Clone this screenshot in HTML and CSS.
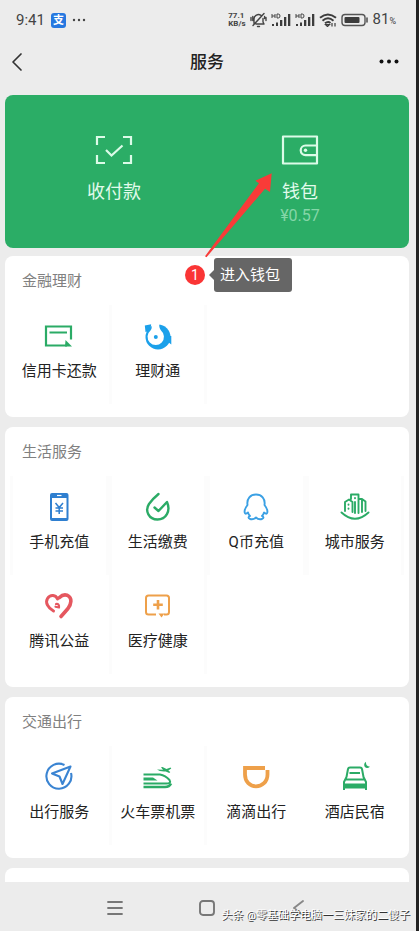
FILE: index.html
```html
<!DOCTYPE html>
<html lang="zh-CN">
<head>
<meta charset="utf-8">
<meta name="viewport" content="width=device-width, initial-scale=1">
<title>服务</title>
<link rel="stylesheet" href="styles.css">
</head>
<body>
<div class="screen">
  <div class="status">
    <div class="status-left">
      <span class="clock">9:41</span>
      <span class="alipay">支</span>
      <svg width="14" height="4" viewBox="0 0 14 4" fill="#444"><circle cx="2" cy="2" r="1.2"/><circle cx="7" cy="2" r="1.2"/><circle cx="12" cy="2" r="1.2"/></svg>
    </div>
    <div class="status-right">
      <span class="speed">77.1<br>KB/s</span>
      <svg width="17" height="16" viewBox="0 0 17 16" fill="none" stroke="#444" stroke-width="1.4" stroke-linecap="round" stroke-linejoin="round"><path d="M4 11.500V7a4.500 4.500 0 0 1 7-3.700M13 6.500V10l1 2H6M14 1.500L3 13.500M7.500 14.500h2M1 5.500v3M2.800 4.500v4M16 5.500v3M14.600 4.500v2"/></svg>
      <svg width="20" height="14" viewBox="0 0 20 14" fill="#3c3c3c"><path d="M1 1v4M4 1v4M1 3h3M6 1v4h1.200q1.800 0 1.800-2t-1.800-2z" fill="none" stroke="#444" stroke-width="1"/><path d="M1 11h2v2H1zM5 9.500h2V13H5zM9 7h2.300v6H9zM13 4h2.300v9H13zM17 1h2.300v12H17z"/></svg>
      <svg width="20" height="14" viewBox="0 0 20 14" fill="#3c3c3c"><path d="M1 1v4M4 1v4M1 3h3M6 1v4h1.200q1.800 0 1.800-2t-1.800-2z" fill="none" stroke="#444" stroke-width="1"/><path d="M1 11h2v2H1zM5 9.500h2V13H5zM9 7h2.300v6H9zM13 4h2.300v9H13zM17 1h2.300v12H17z"/></svg>
      <svg width="18" height="14" viewBox="0 0 18 14" fill="none" stroke="#3c3c3c" stroke-width="1.900"><path d="M1 4.800q7.800-6.800 16 0M3.500 7.700q5.500-4.800 11 0M6 10.300q3-2.500 5.500-.4"/><path d="M8.500 13.500l-2-2h4zM13 10v3.500M16 10v3.500" stroke-width="1.200"/></svg>
      <svg width="28" height="14" viewBox="0 0 28 14"><rect x="1" y="1.500" width="23" height="11" rx="3" fill="none" stroke="#555" stroke-width="1.400"/><rect x="3.500" y="4" width="15" height="6" rx="1" fill="#3c3c3c"/><path d="M26 5v4" stroke="#555" stroke-width="1.600" stroke-linecap="round"/></svg>
      <span class="percent">81<small>%</small></span>
    </div>
  </div>

  <header class="topbar">
    <button class="icon-button back" aria-label="返回"><svg width="12" height="20" viewBox="0 0 12 20" fill="none" stroke="#333" stroke-width="1.700" stroke-linecap="round" stroke-linejoin="round"><path d="M10 2L2 10l8 8"/></svg></button>
    <h1>服务</h1>
    <button class="icon-button more" aria-label="更多"><svg width="20" height="5" viewBox="0 0 20 5" fill="#111"><circle cx="2.500" cy="2.500" r="2"/><circle cx="10" cy="2.500" r="2"/><circle cx="17.500" cy="2.500" r="2"/></svg></button>
  </header>

  <main class="content">
    <section class="pay">
      <a class="pay-item" href="#pay">
        <svg width="38" height="30" viewBox="0 0 38 30" fill="none" stroke="#dcfbe8" stroke-width="2.200"><path d="M10 2H2v8M28 2h8v8M2 20v8h8M36 20v8h-8M11 15l5.500 5.500L27.500 10.500"/></svg>
        <span>收付款</span>
      </a>
      <a class="pay-item" href="#wallet">
        <svg width="38" height="30" viewBox="0 0 38 30" fill="none" stroke="#dcfbe8" stroke-width="2.200" stroke-linejoin="round"><rect x="2" y="1.500" width="34" height="27"/><path d="M36 10.500H24.500a4.800 4.800 0 0 0 0 9.600H36"/><circle cx="24.500" cy="15.300" r="1.700" fill="#dcfbe8" stroke="none"/></svg>
        <span>钱包</span>
        <small>¥0.57</small>
      </a>
      <svg class="arrow" width="70" height="86" viewBox="0 0 70 86" fill="#f93b38"><path d="M67.700 1.300L51.300 8.700l3.700 2.600L1 84.300l1.500.9L61 16.800l5 3.200z"/></svg>
      <div class="callout"><span class="step">1</span><span class="tip">进入钱包</span></div>
    </section>

    <section class="card">
      <h2>金融理财</h2>
      <div class="grid">
        <a class="cell" href="#credit">
          <svg class="icon" viewBox="0 0 32 32" fill="none" stroke="#2bab66" stroke-width="2"><path d="M28 19.500V6.500H3v19h21M6.500 12.500H24" stroke-width="2.200"/><path d="M22.500 20l6.500 6.500h-7z" fill="#2bab66" stroke="none"/></svg>
          <span>信用卡还款</span></a>
        <a class="cell framed" href="#licaitong">
          <svg class="icon" viewBox="0 0 32 32"><circle cx="16" cy="17" r="12.500" fill="#1ba0ea"/><path d="M2.800 5.500l6.500-1.300L8 11l-4.500 1zM26 16h3.300v8.500L26 22z" fill="#1ba0ea"/><path d="M8.500 2l9 1Q16.500 7 19 10.500a8.200 8.200 0 1 1-10.500 0Q11 8 8.500 2z" fill="#fff"/><circle cx="13.800" cy="17" r="2" fill="#1ba0ea"/></svg>
          <span>理财通</span></a>
      </div>
    </section>

    <section class="card">
      <h2>生活服务</h2>
      <div class="grid">
        <a class="cell framed" href="#mobile">
          <svg class="icon" viewBox="0 0 32 32"><path fill="#2f7fd0" fill-rule="evenodd" d="M9 2h14.500a2 2 0 0 1 2 2v24a2 2 0 0 1-2 2H9a2 2 0 0 1-2-2V4a2 2 0 0 1 2-2zM9 7v20h14.500V7z"/><path d="M14 4.500h4.500" stroke="#fff" stroke-width="1.200"/><path d="M12.500 12l3.700 4.500L20 12M12.500 17h7.500M12.500 20h7.500M16.200 16.500V23" fill="none" stroke="#2f7fd0" stroke-width="1.500"/></svg>
          <span>手机充值</span></a>
        <a class="cell framed" href="#utilities">
          <svg class="icon" viewBox="0 0 32 32" fill="none" stroke="#2bab66" stroke-width="2.400" stroke-linecap="round" stroke-linejoin="round"><path d="M16.500 3Q11 7.500 7 13C2.500 20 7 28.500 15.500 28.500S29 20 25 11L16.500 20l-4-3.500"/></svg>
          <span>生活缴费</span></a>
        <a class="cell framed" href="#qcoin">
          <svg class="icon" viewBox="0 0 32 32" fill="none" stroke="#3aa0e4" stroke-width="1.900" stroke-linecap="round" stroke-linejoin="round"><path d="M7.500 14C6.500 7.500 10.500 3.500 16 3.500S25.500 7.500 24.500 14Q28 18.500 27.300 21.500 27 24 24 21.500 23.500 23.500 22 25q3 1.500 0 3-3.500 1-6-1.500-2.500 2.500-6 1.500-3-1.500 0-3-1.500-1.500-2-3.500-3 2.500-3.300 0Q4 18.500 7.500 14z"/></svg>
          <span>Q币充值</span></a>
        <a class="cell framed" href="#city">
          <svg class="icon" viewBox="0 0 32 32" fill="none" stroke="#2bab66" stroke-width="1.900" stroke-linecap="round" stroke-linejoin="round"><path d="M2.500 21.500Q16 34 29.500 21.500M6 20V11l4-2.500 3.500 2.500v10M12 8V3.500h7.500V22M23 21V8l3.500 2.500V20M16 11v11M9.500 13.500v.2M9.500 17.500v.2M16 7v.2M19.500 8H23"/></svg>
          <span>城市服务</span></a>
        <a class="cell" href="#charity">
          <svg class="icon" viewBox="0 0 32 32" fill="none" stroke="#e5575f" stroke-width="3" stroke-linecap="round" stroke-linejoin="round"><path d="M10.500 21C5 18 2 12.500 4.500 8.500 7.500 4 13 5 14.500 9"/><path d="M16.500 7.500Q20 4 24 5.200C30 8 28 14.500 25 18.500q-3 3.500-7 8" stroke-width="3.600"/><path d="M13 14q3.500-.5 3 3.500l-3.500-.8" stroke-width="2.200"/></svg>
          <span>腾讯公益</span></a>
        <a class="cell framed" href="#health">
          <svg class="icon" viewBox="0 0 32 32" fill="none" stroke="#eea04a" stroke-width="2"><path d="M14 24.500H6.500a2.500 2.500 0 0 1-2.500-2.500V8a2.500 2.500 0 0 1 2.500-2.500h18A2.500 2.500 0 0 1 27 8v14a2.500 2.500 0 0 1-2.500 2.500H22"/><path d="M16 10v9.500M11.200 14.700h9.600" stroke-width="2.600"/><path d="M16.500 23.500h6l-3 4z" fill="#eea04a" stroke="none"/></svg>
          <span>医疗健康</span></a>
      </div>
    </section>

    <section class="card">
      <h2>交通出行</h2>
      <div class="grid">
        <a class="cell" href="#travel">
          <svg class="icon" viewBox="0 0 32 32" fill="none" stroke="#3a84d2" stroke-width="2.100" stroke-linejoin="round"><path d="M21.500 4A12.500 12.500 0 1 0 28 12"/><path d="M27.500 5.500L9 12.500l7.500 3L19.500 23z"/></svg>
          <span>出行服务</span></a>
        <a class="cell framed" href="#tickets">
          <svg class="icon" viewBox="0 0 32 32" fill="none" stroke="#2bab66"><path d="M1.500 13.500H18q5.500 1 9.500 5.500 2 3.500-3 3.500H1.500" stroke-width="2"/><path d="M1.500 26H23q4.500 0 6-3.500" stroke-width="2.600"/><path d="M1.500 16.500H11l4.500 3H1.500z" fill="#2bab66" stroke="none"/><path d="M15 8.500l6 .3-2-2.600 1.500-.2 4 2 4-1.500.8 1-3 2 2 1.500-1 1-3.500-1.500q-6 .5-8.800-2z" fill="#2bab66" stroke="none"/></svg>
          <span>火车票机票</span></a>
        <a class="cell" href="#didi">
          <svg class="icon" viewBox="0 0 32 32" fill="none" stroke="#eea04a" stroke-width="3.800"><path d="M25 7H5v6.500C5 21 10 25.300 16 25.300S27.500 21 27.500 13.500V9"/></svg>
          <span>滴滴出行</span></a>
        <a class="cell" href="#hotel">
          <svg class="icon" viewBox="0 0 32 32" fill="none" stroke="#2bab66" stroke-width="2" stroke-linejoin="round"><path d="M7.500 16L9 8q.3-1.500 2-1.500h10q1.700 0 2 1.500l1.500 8 2.500 5v8M7.500 16L5 21v8M10.500 12H21M6.500 18.500h19"/><path d="M4 22.500h24V27.500H4z" fill="#2bab66" stroke="none"/><path d="M27 .7q-.5 4.500 4 5-3 2.500-5.300 0-1.500-3 1.300-5z" fill="#2bab66" stroke="none"/></svg>
          <span>酒店民宿</span></a>
      </div>
    </section>

    <section class="card next"></section>
  </main>

  <nav class="nav">
    <button class="icon-button" aria-label="菜单"><svg width="18" height="16" viewBox="0 0 18 16" stroke="#777" stroke-width="1.800" stroke-linecap="round"><path d="M2 2h14M2 8h14M2 14h14"/></svg></button>
    <button class="icon-button" aria-label="主页"><svg width="18" height="18" viewBox="0 0 18 18" fill="none" stroke="#777" stroke-width="1.900"><rect x="2" y="2" width="14" height="14" rx="3"/></svg></button>
    <button class="icon-button" aria-label="后退"><svg width="18" height="18" viewBox="0 0 18 18" fill="none" stroke="#888" stroke-width="1.900" stroke-linecap="round" stroke-linejoin="round"><path d="M13 2L4 9l9 7"/></svg></button>
    <span class="watermark">头条 @零基础学电脑一三妹家的二傻子</span>
  </nav>
</div>
</body>
</html>
```
FILE: styles.css
```css
* { box-sizing: border-box; }

body {
  margin: 0;
  background: #222;
  font-family: Roboto, "Noto Sans CJK SC", sans-serif;
  color: #222;
}

a { color: inherit; text-decoration: none; }
svg { display: block; flex: none; }

.screen {
  display: flex;
  flex-direction: column;
  height: 100vh;
  margin-right: 3px;
  background: #ececec;
}

.status {
  display: flex;
  justify-content: space-between;
  align-items: center;
  height: 40px;
  padding: 0 20px 0 16px;
  color: #444;
}
.status-left { display: flex; align-items: center; gap: 6px; }
.status-right { display: flex; align-items: center; gap: 4px; }
.clock, .percent { font-size: 15px; line-height: 20px; }
.percent small { font-size: 9px; }
.alipay {
  width: 15px;
  border-radius: 3px;
  background: #2678e0;
  color: #fff;
  font-size: 11px;
  font-weight: 700;
  line-height: 15px;
  text-align: center;
}
.speed { font-size: 8px; font-weight: 700; line-height: 8px; }

.topbar {
  display: grid;
  grid-template-columns: 1fr auto 1fr;
  align-items: center;
  height: 43px;
  padding: 0 17px 0 11px;
}
.topbar h1 { margin: 0; padding-left: 4px; font-size: 17px; font-weight: 500; line-height: 24px; }
.icon-button {
  display: flex;
  justify-content: center;
  align-items: center;
  padding: 0;
  border: 0;
  background: none;
}
.back { justify-self: start; }
.more { justify-self: end; }

.content {
  flex: 1;
  min-height: 0;
  overflow: hidden;
  padding: 12px 7px 0 5px;
}

.pay {
  position: relative;
  display: grid;
  grid-template-columns: 1fr 1fr;
  height: 153px;
  margin-bottom: 8px;
  padding: 40px 16px 0;
  border-radius: 8px;
  background: #2bad66;
}
.pay-item {
  display: flex;
  flex-direction: column;
  align-items: center;
  color: #e2fbec;
  font-size: 18px;
  line-height: 24px;
}
.pay-item span { margin-top: 15px; }
.pay-item small { font-size: 16px; line-height: 24px; color: #85d6a8; }

.arrow { position: absolute; left: 199px; top: 77px; }
.callout {
  position: absolute;
  z-index: 1;
  left: 180px;
  top: 163px;
  display: flex;
  align-items: center;
  gap: 9px;
}
.step {
  width: 20px;
  border-radius: 50%;
  background: #fa3535;
  color: #fff;
  font-size: 14px;
  line-height: 20px;
  text-align: center;
}
.tip {
  position: relative;
  padding: 0 12px 0 6px;
  border-radius: 3px;
  background: #666;
  color: #fff;
  font-size: 15px;
  line-height: 34px;
}
.tip::before {
  content: "";
  position: absolute;
  left: -5px;
  top: 12px;
  border: 5px solid transparent;
  border-left: 0;
  border-right-color: #666;
}

.card {
  margin-bottom: 10px;
  padding: 0 5px 13px;
  border-radius: 8px;
  background: #fff;
}
.card h2 {
  height: 49px;
  margin: 0;
  padding-left: 12px;
  font-size: 15px;
  font-weight: 400;
  line-height: 50px;
  color: #808080;
}
.card.next { height: 60px; }
.grid { display: grid; grid-template-columns: repeat(4, 1fr); }
.cell {
  display: flex;
  flex-direction: column;
  align-items: center;
  height: 99px;
  padding-top: 15px;
  font-size: 15px;
  line-height: 20px;
  white-space: nowrap;
}
.cell.framed { box-shadow: inset 3px 0 #fcfcfc, inset -3px 0 #fcfcfc; }
.cell span { margin-top: 9px; }
.icon { width: 32px; height: 32px; }

.nav {
  position: relative;
  display: grid;
  grid-template-columns: repeat(3, 92px);
  justify-content: center;
  align-items: center;
  height: 49px;
  padding: 3px 2px 0 0;
}
.watermark {
  position: absolute;
  right: 6px;
  bottom: 7px;
  color: #fff;
  font-size: 11px;
  line-height: 16px;
  white-space: nowrap;
  text-shadow: 1px 1px #333;
}
```
